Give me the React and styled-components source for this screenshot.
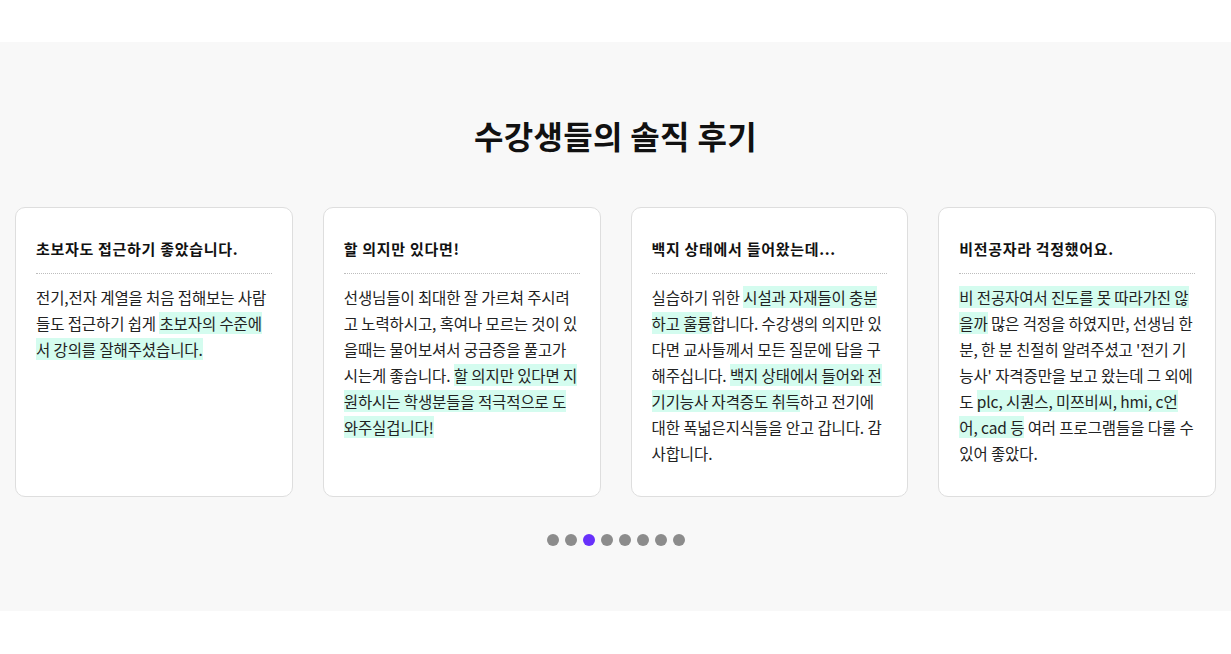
import React from 'react';
import styled, { createGlobalStyle } from 'styled-components';

const GlobalStyle = createGlobalStyle`
  html, body {
    margin: 0;
    padding: 0;
    background: #fff;
    font-family: "Noto Sans CJK KR", "Noto Sans", sans-serif;
    color: #111;
  }
`;

const Page = styled.div`
  padding: 42px 0 44px;
`;

const Section = styled.section`
  background: #f8f8f8;
  padding: 70px 15px 65px;
`;

const Title = styled.h2`
  margin: 0 0 49px;
  text-align: center;
  font-size: 32px;
  font-weight: 700;
  line-height: 46px;
  letter-spacing: 0.3px;
  color: #111;
`;

const CardRow = styled.div`
  display: flex;
  gap: 30px;
  align-items: stretch;
`;

const Card = styled.article`
  flex: 1 1 0;
  min-width: 0;
  background: #fff;
  border: 1px solid #dedede;
  border-radius: 10px;
  padding: 30px 20px 30px;
`;

const CardTitle = styled.h3`
  margin: 0;
  padding-bottom: 13px;
  border-bottom: 1px dotted #bdbdbd;
  font-size: 15px;
  font-weight: 700;
  line-height: 22px;
  letter-spacing: 0.7px;
  color: #111;
`;

const CardBody = styled.p`
  margin: 10px 0 0;
  font-size: 15.5px;
  line-height: 26px;
  letter-spacing: -0.1px;
  word-break: break-all;
  color: #222;
`;

const Mark = styled.mark`
  background: #d4fcef;
  color: inherit;
`;

const Dots = styled.div`
  display: flex;
  justify-content: center;
  gap: 6px;
  margin-top: 37px;
`;

const Dot = styled.span`
  width: 12px;
  height: 12px;
  border-radius: 50%;
  background: ${p => (p.$active ? '#6831fb' : '#8c8c8c')};
`;

const reviews = [
  {
    title: '초보자도 접근하기 좋았습니다.',
    body: (
      <>
        전기,전자 계열을 처음 접해보는 사람들도 접근하기 쉽게{' '}
        <Mark>초보자의 수준에서 강의를 잘해주셨습니다.</Mark>
      </>
    ),
  },
  {
    title: '할 의지만 있다면!',
    body: (
      <>
        선생님들이 최대한 잘 가르쳐 주시려고 노력하시고, 혹여나 모르는 것이
        있을때는 물어보셔서 궁금증을 풀고가시는게 좋습니다.{' '}
        <Mark>할 의지만 있다면 지원하시는 학생분들을 적극적으로 도와주실겁니다!</Mark>
      </>
    ),
  },
  {
    title: '백지 상태에서 들어왔는데...',
    body: (
      <>
        실습하기 위한 <Mark>시설과 자재들이 충분하고 훌륭</Mark>합니다. 수강생의
        의지만 있다면 교사들께서 모든 질문에 답을 구해주십니다.{' '}
        <Mark>백지 상태에서 들어와 전기기능사 자격증도 취득</Mark>하고 전기에
        대한 폭넓은지식들을 안고 갑니다. 감사합니다.
      </>
    ),
  },
  {
    title: '비전공자라 걱정했어요.',
    body: (
      <>
        <Mark>비 전공자여서 진도를 못 따라가진 않을까</Mark> 많은 걱정을
        하였지만, 선생님 한 분, 한 분 친절히 알려주셨고 '전기 기능사' 자격증만을
        보고 왔는데 그 외에도 <Mark>plc, 시퀀스, 미쯔비씨, hmi, c언어, cad 등</Mark>{' '}
        여러 프로그램들을 다룰 수 있어 좋았다.
      </>
    ),
  },
];

function App() {
  return (
    <Page>
      <GlobalStyle />
      <Section>
        <Title>수강생들의 솔직 후기</Title>
        <CardRow>
          {reviews.map(r => (
            <Card key={r.title}>
              <CardTitle>{r.title}</CardTitle>
              <CardBody>{r.body}</CardBody>
            </Card>
          ))}
        </CardRow>
        <Dots>
          {Array.from({ length: 8 }).map((_, i) => (
            <Dot key={i} $active={i === 2} />
          ))}
        </Dots>
      </Section>
    </Page>
  );
}

export default App;
